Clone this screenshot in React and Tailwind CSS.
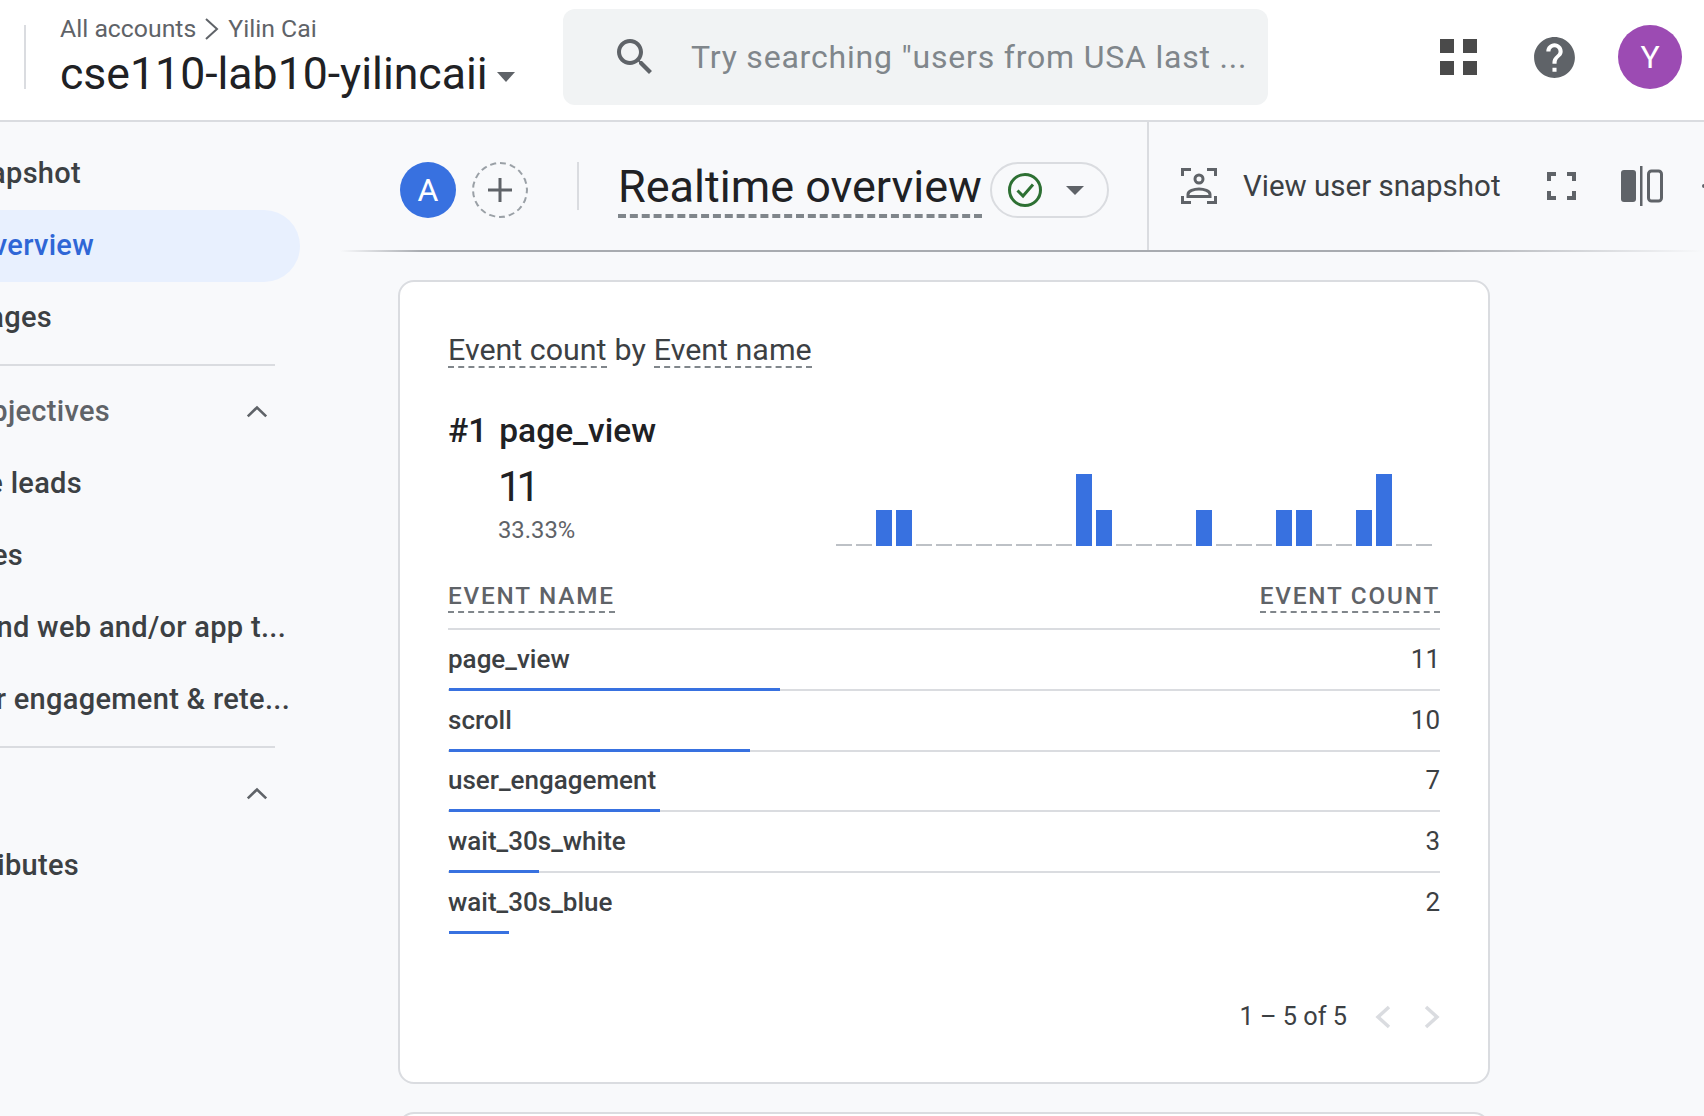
import React from "react";

const rows = [
  { name: "page_view", count: 11 },
  { name: "scroll", count: 10 },
  { name: "user_engagement", count: 7 },
  { name: "wait_30s_white", count: 3 },
  { name: "wait_30s_blue", count: 2 },
];

// 0 = empty minute, 1 = short bar, 2 = tall bar
const minutes = [0,0,1,1,0,0,0,0,0,0,0,0,2,1,0,0,0,0,1,0,0,0,1,1,0,0,1,2,0,0];

function NavRow({ text, end, active, muted, chevron }) {
  return (
    <div className={`relative flex h-[72px] items-center ${active ? "w-[300px] rounded-r-full bg-[#e8f0fe]" : "w-[300px]"}`}>
      <div className={`flex justify-end whitespace-nowrap text-[29px] tracking-[0.3px] ${end} ${active ? "text-[#2f66d6]" : muted ? "text-[#5f6368]" : "text-[#3c4043]"} font-medium`}>
        {text}
      </div>
      {chevron && (
        <svg className="absolute left-[244px] h-[26px] w-[26px]" viewBox="0 0 24 24" fill="none" stroke="#5f6368" strokeWidth="2.4">
          <path d="M3.5 16 12 7.8 20.5 16" />
        </svg>
      )}
    </div>
  );
}

function Sidebar() {
  return (
    <div className="w-[340px] shrink-0 overflow-hidden pt-4">
      <NavRow text="Reports snapshot" end="w-[81px]" />
      <NavRow text="Realtime overview" end="w-[94px]" active />
      <NavRow text="Realtime pages" end="w-[52px]" />
      <div className="mt-[10px] mb-[10px] h-[2px] w-[275px] bg-[#dadce0]" />
      <NavRow text="Business objectives" end="w-[110px]" muted chevron />
      <NavRow text="Generate leads" end="w-[82px]" />
      <NavRow text="Drive sales" end="w-[23px]" />
      <NavRow text="Understand web and/or app t..." end="w-[286px]" />
      <NavRow text="User engagement & rete..." end="w-[290px]" />
      <div className="mt-[10px] mb-[10px] h-[2px] w-[275px] bg-[#dadce0]" />
      <NavRow text="User" end="w-0 opacity-0" chevron />
      <NavRow text="User attributes" end="w-[79px]" />
    </div>
  );
}

function Header() {
  return (
    <div className="flex h-[122px] shrink-0 items-center border-b-2 border-[#dadce0] bg-white pb-[6px]">
      <div className="ml-[24px] h-16 w-[2px] bg-[#dadce0]" />
      <div className="ml-[34px] mt-[5px] w-[503px]">
        <div className="flex h-[30px] items-center whitespace-nowrap text-[24.8px] text-[#5f6368]">
          All accounts
          <svg className="mx-[7px] h-6 w-[18px]" viewBox="0 0 18 24" fill="none" stroke="#5f6368" strokeWidth="2">
            <path d="M3 2 14 12 3 22" />
          </svg>
          Yilin Cai
        </div>
        <div className="flex h-[62px] items-center text-[44.6px] text-[#202124]">
          cse110-lab10-yilincaii
          <svg className="ml-[9px] mt-1 h-[10px] w-[18px]" viewBox="0 0 18 10" fill="#5f6368">
            <path d="M0 0h18L9 10z" />
          </svg>
        </div>
      </div>
      <div className="flex h-24 w-[705px] items-center rounded-xl bg-[#f1f3f4] pl-[48px]">
        <svg className="h-[48px] w-[48px] shrink-0" viewBox="0 0 24 24" fill="#5f6368">
          <path d="M15.5 14h-.79l-.28-.27C15.41 12.59 16 11.11 16 9.5 16 5.91 13.09 3 9.5 3S3 5.91 3 9.5 5.91 16 9.5 16c1.61 0 3.09-.59 4.23-1.57l.27.28v.79l5 4.99L20.49 19l-4.99-5zm-6 0C7.01 14 5 11.99 5 9.5S7.01 5 9.5 5 14 7.01 14 9.5 11.99 14 9.5 14z" />
        </svg>
        <span className="ml-[32px] whitespace-nowrap text-[32px] tracking-[0.8px] text-[#80868b]">Try searching "users from USA last ...</span>
      </div>
      <svg className="ml-[172px] h-9 w-[37px]" viewBox="0 0 37 36" fill="#4a4a4a">
        <rect x="0" y="0" width="14" height="14" />
        <rect x="23" y="0" width="14" height="14" />
        <rect x="0" y="22" width="14" height="14" />
        <rect x="23" y="22" width="14" height="14" />
      </svg>
      <svg className="ml-[53px] h-[49px] w-[49px]" viewBox="0 0 24 24" fill="#5f6368">
        <path d="M12 2C6.48 2 2 6.48 2 12s4.48 10 10 10 10-4.48 10-10S17.52 2 12 2zm1 17h-2v-2h2v2zm2.07-7.75l-.9.92C13.45 12.9 13 13.5 13 15h-2v-.5c0-1.1.45-2.1 1.17-2.83l1.24-1.26c.37-.36.59-.86.59-1.41 0-1.1-.9-2-2-2s-2 .9-2 2H8c0-2.21 1.79-4 4-4s4 1.79 4 4c0 .88-.36 1.68-.93 2.25z" />
      </svg>
      <div className="ml-[39px] flex h-16 w-16 items-center justify-center rounded-full bg-[#9c4bb3] text-[32px] text-white">Y</div>
    </div>
  );
}

function Toolbar() {
  return (
    <div className="flex h-[128px] shrink-0 items-center pl-[60px]">
      <div className="mt-2 flex items-center">
        <div className="flex h-14 w-14 items-center justify-center rounded-full bg-[#3871e0] text-[32px] text-white">A</div>
        <div className="ml-4 flex h-14 w-14 items-center justify-center rounded-full border-2 border-dashed border-[#9aa0a6]">
          <svg className="h-6 w-6" viewBox="0 0 24 24" fill="none" stroke="#5f6368" strokeWidth="3">
            <path d="M12 0v24M0 12h24" />
          </svg>
        </div>
        <div className="mb-2 ml-[49px] h-12 w-[2px] bg-[#dadce0]" />
        <div className="mb-[3px] ml-[39px] whitespace-nowrap border-b-4 border-dashed border-[#80868b] text-[45px] leading-[54px] text-[#202124]">Realtime overview</div>
        <div className="ml-2 flex h-14 w-[119px] shrink-0 items-center rounded-full border-2 border-[#dadce0] pl-[15px]">
          <svg className="h-[36px] w-[36px]" viewBox="0 0 36 36" fill="none" stroke="#2d7033" strokeWidth="3">
            <circle cx="18" cy="18" r="15.5" />
            <path d="M10.5 18.5 16 24 26 12.5" />
          </svg>
          <svg className="ml-[23px] h-[9px] w-[18px]" viewBox="0 0 18 9" fill="#5f6368">
            <path d="M0 0h18L9 9z" />
          </svg>
        </div>
      </div>
      <div className="ml-[38px] w-[2px] shrink-0 self-stretch bg-[#dadce0]" />
      <svg className="ml-[32px] h-[36px] w-[36px] shrink-0" viewBox="0 0 36 36" fill="none" stroke="#5f6368" strokeWidth="3">
        <path d="M1.5 8V1.5H10M26 1.5h8.500V8M1.500 28v6.500H10M26 34.500h8.500V28" />
        <circle cx="18" cy="11" r="4" />
        <path d="M7 28.500v-2c0-3.500 6-5.500 11-5.500s11 2 11 5.500v2z" />
      </svg>
      <span className="ml-[26px] whitespace-nowrap text-[29.5px] text-[#3c4043]">View user snapshot</span>
      <svg className="ml-[46px] h-7 w-[29px] shrink-0" viewBox="0 0 29 28" fill="none" stroke="#5f6368" strokeWidth="4">
        <path d="M2 9V2h7M20 2h7v7M2 19v7h7M20 26h7v-7" />
      </svg>
      <svg className="ml-[45px] h-10 w-[42px] shrink-0" viewBox="0 0 42 40">
        <rect x="0" y="4" width="15" height="32" rx="3" fill="#5f6368" />
        <rect x="19" y="0" width="2.500" height="40" fill="#5f6368" />
        <rect x="27.500" y="5" width="13" height="30" rx="3" fill="none" stroke="#5f6368" strokeWidth="3" />
      </svg>
      <div className="ml-[39px] h-1 w-1 shrink-0 rounded-full bg-[#5f6368]" />
    </div>
  );
}

function EventCard() {
  return (
    <div className="ml-[58px] mt-[28px] h-[804px] w-[1092px] shrink-0 rounded-2xl border-2 border-[#dadce0] bg-white px-[48px] pt-[52px]">
      <div className="flex h-[35px] items-start text-[30.4px] leading-[32px] text-[#3c4043]">
        <span className="border-b-2 border-dashed border-[#80868b]">Event count</span>
        <span className="mx-2">by</span>
        <span className="border-b-2 border-dashed border-[#80868b]">Event name</span>
      </div>
      <div className="mt-[42px] flex h-10 items-center text-[33.5px] font-medium text-[#202124]">
        <span>#1</span>
        <span className="ml-[12px]">page_view</span>
      </div>
      <div className="flex h-[95px]">
        <div className="w-[388px] pl-[50px] pt-[13px]">
          <div className="text-[42px] leading-[46px] tracking-[-5px] text-[#202124]">11</div>
          <div className="mt-[5px] text-[23.8px] leading-[30px] text-[#5f6368]">33.33%</div>
        </div>
        <div className="flex items-end gap-1">
          {minutes.map((m, i) => (
            <div
              key={i}
              className={`w-4 ${m === 2 ? "h-[72px] bg-[#3871e0]" : m === 1 ? "h-9 bg-[#3871e0]" : "h-[2px] bg-[#bdc1c6]"}`}
            />
          ))}
        </div>
      </div>
      <div className="flex justify-between border-b-2 border-[#dadce0] pb-[15px] pt-[35px] text-[24.3px] font-medium leading-[30px] tracking-[1.8px] text-[#5f6368]">
        <span className="border-b-2 border-dashed border-[#80868b]">EVENT NAME</span>
        <span className="border-b-2 border-dashed border-[#80868b]">EVENT COUNT</span>
      </div>
      {rows.map((row, i) => (
        <div key={row.name} className="flex h-[60.8px] flex-col">
          <div className="flex flex-1 items-center justify-between text-[26px] text-[#3c4043]">
            <span className="font-medium">{row.name}</span>
            <span>{row.count}</span>
          </div>
          <div className={`h-[2px] ${i < rows.length - 1 ? "bg-[#dadce0]" : ""}`}>
            <div className="-mt-[1px] ml-[1px] h-[3px] bg-[#3871e0]" style={{ width: row.count * 30.1 }} />
          </div>
        </div>
      ))}
      <div className="mt-[68px] flex h-[30px] items-center justify-end text-[25.3px] text-[#3c4043]">
        <span>1 – 5 of 5</span>
        <svg className="ml-[28px] h-6 w-4" viewBox="0 0 16 24" fill="none" stroke="#dadce0" strokeWidth="3.500">
          <path d="M14 2 3 12l11 10" />
        </svg>
        <svg className="ml-[33px] h-6 w-4" viewBox="0 0 16 24" fill="none" stroke="#dadce0" strokeWidth="3.500">
          <path d="M2 2l11 10L2 22" />
        </svg>
      </div>
    </div>
  );
}

export default function App() {
  return (
    <div className="flex h-[1116px] w-[1704px] flex-col overflow-hidden bg-[#f8f9fb] font-['Roboto',sans-serif]">
      <Header />
      <div className="flex min-h-0 flex-1">
        <Sidebar />
        <div className="flex min-w-0 flex-1 flex-col">
          <Toolbar />
          <div className="h-[2px] shrink-0 bg-[linear-gradient(to_right,transparent,#a8abb0_6%,#a8abb0_80%,transparent)]" />
          <EventCard />
          <div className="ml-[58px] mt-[28px] h-20 w-[1092px] shrink-0 rounded-2xl border-2 border-[#dadce0] bg-white" />
        </div>
      </div>
    </div>
  );
}
